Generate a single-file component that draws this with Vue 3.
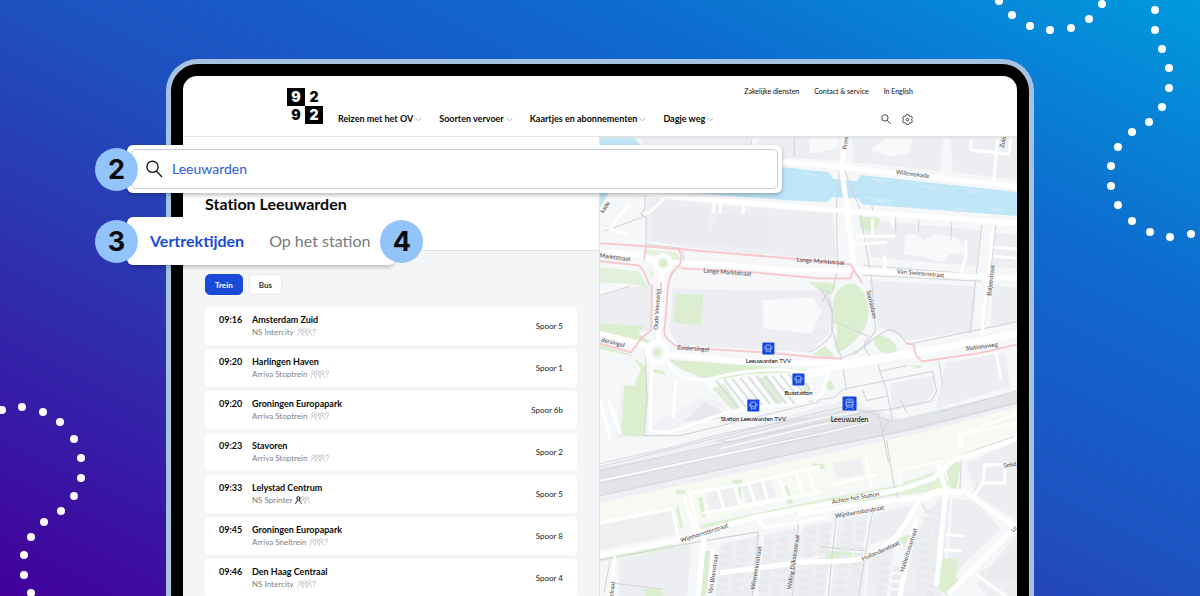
<script setup>
import { ref } from 'vue'

const navItems = ['Reizen met het OV', 'Soorten vervoer', 'Kaartjes en abonnementen', 'Dagje weg']
const serviceLinks = ['Zakelijke diensten', 'Contact & service', 'In English']
const query = ref('Leeuwarden')

const departures = [
  { time: '09:16', to: 'Amsterdam Zuid', type: 'NS Intercity', track: 'Spoor 5', known: false },
  { time: '09:20', to: 'Harlingen Haven', type: 'Arriva Stoptrein', track: 'Spoor 1', known: false },
  { time: '09:20', to: 'Groningen Europapark', type: 'Arriva Stoptrein', track: 'Spoor 6b', known: false },
  { time: '09:23', to: 'Stavoren', type: 'Arriva Stoptrein', track: 'Spoor 2', known: false },
  { time: '09:33', to: 'Lelystad Centrum', type: 'NS Sprinter', track: 'Spoor 5', known: true },
  { time: '09:45', to: 'Groningen Europapark', type: 'Arriva Sneltrein', track: 'Spoor 8', known: false },
  { time: '09:46', to: 'Den Haag Centraal', type: 'NS Intercity', track: 'Spoor 4', known: false },
]

const dotsRight = [
  [999, 1], [1012, 15], [1030, 26], [1050, 30], [1071, 28], [1089, 19], [1102, 4],
  [1155, 10], [1155, 30], [1162, 49], [1169, 68], [1169, 88], [1162, 107], [1149, 122], [1132, 132],
  [1118, 147], [1111, 166], [1111, 186], [1118, 205], [1132, 221], [1150, 232], [1170, 237], [1191, 234],
]
const dotsLeft = [
  [2, 410], [22, 407], [43, 412], [60, 422], [74, 439], [81, 458], [81, 478],
  [74, 496], [61, 511], [44, 522], [31, 537], [24, 555], [24, 575], [31, 593],
]

const labels = [
  { t: 'Willemskade', x: 912, y: 174, r: 7 },
  { t: 'Prins', x: 845, y: 143, r: -84 },
  { t: 'Zuid', x: 1002, y: 142, r: -80 },
  { t: 'kade', x: 605, y: 207, r: -55 },
  { t: 'Marktstraat', x: 615, y: 257, r: 7 },
  { t: 'Lange Marktstraat', x: 727, y: 272, r: 4 },
  { t: 'Lange Marktstraat', x: 820, y: 261, r: 4 },
  { t: 'Van Swietenstraat', x: 920, y: 273, r: 5 },
  { t: 'Baljeestraat', x: 990, y: 280, r: -83 },
  { t: 'Sophialaan', x: 871, y: 304, r: 77 },
  { t: 'Oude Veemarkt', x: 657, y: 309, r: -86 },
  { t: 'Zuidersingel', x: 693, y: 348, r: 4 },
  { t: 'dersingel', x: 613, y: 342, r: 14 },
  { t: 'Stationsweg', x: 981, y: 346, r: -7 },
  { t: 'Wijnhornsterstraat', x: 704, y: 532, r: -18 },
  { t: 'Achter het Station', x: 855, y: 497, r: -10 },
  { t: 'Wijnhornsterstraat', x: 859, y: 511, r: -10 },
  { t: 'Hollanderstraat', x: 880, y: 550, r: -24 },
  { t: 'Halbertsmastraat', x: 908, y: 549, r: -73 },
  { t: 'Van Blomstraat', x: 713, y: 573, r: -81 },
  { t: 'Winsemiusstraat', x: 756, y: 567, r: -81 },
  { t: 'Waling Dijkstrastraat', x: 793, y: 561, r: -81 },
  { t: 'straat', x: 612, y: 588, r: -82 },
  { t: 'Smid', x: 1009, y: 464, r: -10 },
  { t: 'Le', x: 1013, y: 528, r: -50 },
]

const stops = [
  { name: 'Leeuwarden TVV', x: 768, y: 348 },
  { name: 'Busstation', x: 798, y: 379 },
  { name: 'Station Leeuwarden TVV', x: 753, y: 405 },
]

const bays = Array.from({ length: 11 }, (_, i) => [716 + i * 8, 380 - Math.min(i, 5) - Math.max(0, i - 7)])
const gardens = []
for (const [x0, y0, n] of [[722, 544, 7], [738, 540, 7], [764, 538, 8], [778, 536, 8], [806, 528, 9], [822, 524, 9],
  [843, 522, 9], [857, 520, 7], [880, 560, 5], [893, 566, 4], [924, 508, 12], [936, 502, 12]]) {
  for (let i = 0; i < n; i++) gardens.push([x0 - i, y0 + i * 8])
}
</script>

<template>
  <main class="page">
    <svg class="dots dots-right" viewBox="990 0 210 250" width="210" height="250" aria-hidden="true">
      <circle v-for="(d, i) in dotsRight" :key="i" :cx="d[0]" :cy="d[1]" r="4" fill="#fff" />
    </svg>
    <svg class="dots dots-left" viewBox="0 396 100 200" width="100" height="200" aria-hidden="true">
      <circle v-for="(d, i) in dotsLeft" :key="i" :cx="d[0]" :cy="d[1]" r="4" fill="#fff" />
    </svg>

    <div class="tablet">
      <div class="bezel">
        <div class="screen">
          <header class="header">
            <a class="logo" href="#" aria-label="9292">
              <span class="inv">9</span><span>2</span><span>9</span><span class="inv">2</span>
            </a>
            <nav class="nav">
              <a v-for="item in navItems" :key="item" href="#">
                {{ item }}
                <svg width="7" height="5" viewBox="0 0 7 5" aria-hidden="true"><path d="M.6 .8 3.5 3.8 6.4 .8" fill="none" stroke="#a3a6aa" stroke-width=".8" /></svg>
              </a>
            </nav>
            <div class="side">
              <div class="service"><a v-for="s in serviceLinks" :key="s" href="#">{{ s }}</a></div>
              <div class="tools">
                <button type="button" aria-label="Zoeken">
                  <svg width="10" height="10" viewBox="0 0 10 10"><g fill="none" stroke="#333" stroke-width=".9"><circle cx="3.9" cy="3.9" r="3.2" /><path d="M6.2 6.3 9.6 9.7" /></g></svg>
                </button>
                <button type="button" aria-label="Instellingen">
                  <svg width="11" height="11" viewBox="0 0 11 11"><g fill="none" stroke="#333" stroke-width=".9" stroke-linejoin="round"><path d="M4.400 .6h2.200l.4 1.200 1.100.6 1.300-.2 1.100 1.900-.9 1v1l.9 1-1.100 1.900-1.300-.2-1.100.6-.4 1.100H4.400L4 9.400l-1.100-.6-1.300.2L.5 7.100l.9-1v-1l-.9-1 1.100-1.900 1.300.2L4 1.800z" /><circle cx="5.500" cy="5.600" r="1.300" /></g></svg>
                </button>
              </div>
            </div>
          </header>

          <div class="content">
            <section class="panel">
              <div class="panel-head"><h1>Station Leeuwarden</h1></div>
              <div class="filters">
                <button type="button" class="active">Trein</button>
                <button type="button">Bus</button>
              </div>
              <ul class="departures">
                <li v-for="(d, i) in departures" :key="i">
                  <time>{{ d.time }}</time>
                  <div class="dest">
                    <strong>{{ d.to }}</strong>
                    <span class="type">{{ d.type }}
                      <svg width="20" height="8" viewBox="0 0 20 8" aria-hidden="true">
                        <g fill="none" stroke-linecap="round">
                          <g v-for="n in 3" :key="n" :stroke="d.known && n === 1 ? '#111' : '#b4b7bc'" :stroke-width="d.known && n === 1 ? 1 : 0.7">
                            <circle :cx="n * 4.3 - 1" cy="2.3" r="1.6" />
                            <path :d="`M${n * 4.3 - 3.6} 7.400l1.600-2.700M${n * 4.3 - 0.2} 4l2.100 3.400`" />
                          </g>
                          <path v-if="!d.known" d="M15.600 2.300c.2-1.800 3.200-1.600 3 .1-.1 1.200-1.500 1.200-1.500 2.500M17.100 6.800v.2" stroke="#a9adb2" stroke-width=".8" />
                        </g>
                      </svg>
                    </span>
                  </div>
                  <span class="track">{{ d.track }}</span>
                </li>
              </ul>
            </section>

            <svg class="map" viewBox="600 137 417 459" preserveAspectRatio="xMinYMin slice" role="img" aria-label="Kaart rond Station Leeuwarden">
              <rect x="600" y="136" width="900" height="900" fill="#f5f7f9" />
              <!-- building blocks -->
              <g fill="#edeef1">
                <path d="M640 136h110v20l-105-8zM757 136h82v24l-80-3zM852 136h90l-2 35-88-9zM950 136h67v44l-65-8z" />
                <path d="M647 198l20 1 60 6 80 6 25 2 4 46-80-5-76-8-34-6z" />
                <path d="M862 220l32 2 86 8-5 36-84-7-20-2zM992 233l25 1v34l-28-2z" />
                <path d="M600 296l30-9 22-1-2 45-50-2zM672 288l70 2 85 0 7 14-6 30-20 18-130-8-8-12z" />
                <path d="M868 280l108 6-4 44-64 10-30-14zM992 285l25 2v34l-27 4z" />
                <path d="M890 383l45-9-2 18-12 12-30 6zM945 362l60-10 4 34-74 22z" />
                <path d="M622 388l-6 50 70-12 46-24-34-4-44 26z" opacity=".6" />
                <path d="M619 559l72-16-4 53h-68z" />
                <path d="M720 543l40-9-7 62h-38zM764 534l34-7-7 69h-33zM803 526l31-6-8 34-32 3zM838 519l30-5-7 32-26 8zM873 513l42-9-12 28-35 12z" />
                <path d="M722 564l36-6-5 38h-34zM795 563l34-2-5 35h-33zM834 561l32-4-4 39h-32zM868 553l26-9-8 52h-20zM910 540l30-45 9 3-8 98h-40zM965 462l52-22v80l-42-26z" />
                <path d="M952 498l22 2 26 28-54 52zM976 582l41-50v64h-30z" />
              </g>
              <g fill="#e8e9ed">
                <path d="M650 207h60l-4 38-52-6zM720 212l50 6-3 32-62-8zM975 574l42-28v34l-28-2z" opacity=".7" />
              </g>
              <g fill="#f8f9fb">
                <path d="M762 300l50-3 9 14-10 22-48-5zM808 136h30v12l-28 6zM870 150l18-14h24l-4 18-20 2zM905 234h10l8 6 10-6 24 4 8 14-16 2-8 8-20-6-18-2z" />
              </g>
              <!-- water -->
              <g fill="#bfe6f7">
                <path d="M600 136h33l12 14 137 17 26 3 20 2 5 7 24 2 3-6 157 17v24l-155-12-5-6-26-1-4 5-40-2-187-14z" />
                <path d="M600 193h9l-9 14z" />
              </g>
              <path d="M868 178l24 2-12 3zM918 185l24 2-12 3zM862 196l36 4-18 3zM960 188l24 3-12 3zM945 206l24 3-12 3zM985 206l22 3-12 3zM800 172l20 3-12 2z" fill="#cdebf7" />
              <!-- parks -->
              <g fill="#dbefd0">
                <path d="M600 267l38 4 13 19-18-6-33-2z" opacity=".75" /><path d="M646 249l30 3 8 13-6 4-14-12-18-3zM653 272l-6-4 5 10zM670 272l6-4-7 14z" opacity=".7" />
                <path d="M676 293l27 2-2 30-28-3z" />
                <path d="M600 323l44 2-6 8 12 8-8 4-20-7-22-5zM600 348l32 8 14 10 2 30-5 40-22-1 3-50 10 0 7-17-10-14-31-10z" />
                <path d="M668 359l150 11v3l-60 1-30 5-28-2-20-9z" />
                <path d="M652 368l12 3 2 4-12-3z" />
                <path d="M808 282l20 0 8 4-5 9-14-6zM833 302c0-10 8-18 18-19 10 2 16 14 17 27 0 14-6 22-13 29-7 8-12 10-17 14-8-8-1-16-1-25-4-10-5-18-4-26zM812 354l12-8 10 9-6 3z" />
                <path d="M874 338c6-8 20 2 23 11-6 8-25 3-23-11zM858 216l22 2-6 14-14-2z" />
                <path d="M908 365l14 0-4 3zM824 383l6-4 5 9-6 2z" />
                <path d="M825 549l28 3-4 7-24 0zM898 538l12-5-6 12zM942 557l16 2-3 18 7 5-14 14-12-10zM642 588l18 0 4 8h-18z" />
              </g>
              <!-- area south of the tracks -->
              <path d="M600 500l220-48 100-22 97-24v32l-60 22-26 6-40 14-70 14-93 20-22 4-106 24z" fill="#f7faf2" />
              <path d="M600 553l74-13 0 8-74 13z" fill="#e6f3dd" />
              <g fill="#eeeff1"><path d="M706 492l30-6 3 20-30 5zM742 484l28-6 6 18-30 7zM832 463l28-6 4 16-28 5zM600 524l75-15 3 24-78 16z" /></g>
              <g fill="#dbefd0"><path d="M676 489h9v4h-9zM732 479h10v5h-10zM812 463h12v5h-12zM738 485h3v14h-3zM784 485l3 0 6 18h-6zM678 505l5 22-3 1-4-20zM698 497l4 0 4 19-4 0zM946 470l8-10 6 2-4 26h-6zM704 550h6l-4 46h-6z" /><path d="M700 524l58-12 62-13 74-14 46-16 9 14-7 7-55 6-59 12-60 7-66 18z" opacity=".8" /></g>
              <!-- railway -->
              <path d="M600 466l80-21 138-38 30-8 60 22 110-31v16l-97 26-100 22-221 48z" fill="#eff0f4" />
              <g fill="#e0e2e6"><path d="M600 482l220-46 68-15 129-30v12l-97 25-100 20-220 47zM600 468l65-12 155-32 46-12 2 7-48 12-220 46zM712 440l106-26 30-6 28 2 3 8 22 2-2 10-30 8-60 6-60 2z" opacity=".9" /></g>
              <g fill="none" stroke="#cfd2d7" stroke-width=".8">
                <path d="M600 466l218-54 40-9M600 470l130-29M600 478l220-46 48-11M600 482l220-47M600 495l220-48 70-14 127-31M937 412l80-22M704 447l156-34M600 463l70-16 52-14 86-16" />
              </g>
              <g fill="none" stroke="#fbfcfd" stroke-width="1.4"><path d="M600 480l220-47 48-11M726 440l92-22 40-7M680 424l40-4M720 448l100-24 42-7" /></g>
              <!-- footpaths -->
              <g fill="none" stroke="#d3d6d9" stroke-width="1.100">
                <path d="M645 196v12l-4 6 5 3v27M604 231l41-15M646 244l35 4 5 18M839 168l-3 36 1 66-5 20M843 168l16 40 12 72 4 50-8 12-13 12M600 295l30-9M829 290l-8 12M861 275l120 6M863 265l150 12M981 225l-12 108M995 225l-12 100M895 213v20M918 220v12M951 222l-1 18M873 213l-2-8" />
                <path d="M828 298l4 12-1 18 10 30 5 32M818 286c14 18 22 44 6 56-6 6-12 8-16 10M832 320l36 16M868 338c-10 6 0 18 8 22l10 30 6 30M842 357c20-6 30-20 44-27 8-4 16 8 21 14l110-23M808 401l26-4 8-8 90-18 4 20-6 10-44 8-26 3M878 371l28-6M862 389l4 11 20-4M868 412l20 8-6 12 6 30M878 412l4 20M900 400l6 12M886 440l8 48 4 10M938 360l4 24M645 350l2 50-3 35h36l140-34M600 559l98-18 60-10M866 550l-46-4M836 516l-5 44-3 36M872 510l-10 60-4 26M758 530l-6 66M798 523l-6 73M961 454l52-18M961 454l-2 36M920 500l4 8M610 560l-6 32M612 582l50 6M752 136l-3 18M794 136v20" />
              </g>
              <!-- parking rows -->
              <path d="M704 382l42-8 44-2 20 6 4 8-6 14-24 6-50 8z" fill="#fbfcfc" />
              <path d="M712 388l12-5 16 24-8 3zM757 379l10-4 17 26-8 4zM802 386l6-4 2 8-6 4z" fill="#e0efd8" />
              <g fill="none" stroke="#dcdfe2" stroke-width="2"><path v-for="(b, i) in bays" :key="'b' + i" :d="`M${b[0]} ${b[1]}l${i > 7 ? 14 : 22} ${i > 7 ? 18 : 28}`" /></g>
              <path d="M684 421l20-20 16 9 6 8z" fill="#e6e8eb" />
              <!-- houses -->
              <g fill="#e9eaed"><rect v-for="(g, i) in gardens" :key="'g' + i" :x="g[0]" :y="g[1]" width="9" height="5" /></g>
              <!-- roads -->
              <g fill="none" stroke="#fff" stroke-linejoin="round" stroke-linecap="round">
                <g stroke-width="5">
                  <path d="M760 160l48 4 60 6 107 12 42 5M600 186l70 10 140 12 81 6 126 9M845 136l-4 32 5 36 8 66" />
                  <path d="M600 251l40 4 16 6M670 262l60 3 60 5 62 0 165 8M662 273l-4 68M600 333l44 11M668 354l75 7 65 2 40-2 70-10 99-19M808 371l60-9 149-28" />
                  <path d="M600 555l80-16 22-8 50-14 70-13 80-16 30-10 20-18 65-22M704 534l-6 62M938 466l7 24-9 93" />
                  <path d="M800 513l60-10 66-6 12-6 26 0 48 34M940 490c-14 1-20 8-28 20-10 20-18 30-42 45-20 8-50 4-74 7l-77 10M915 520l-16 76M1017 524l-42 42-26 26" />
                </g>
                <g stroke-width="3">
                  <path d="M668 362c10 18 30 20 44 16 20-6 70-14 100-4M652 362l-2 68 18 2 58-20 50-8M676 380l-3 36M628 205l-18 24 16 4M648 213l16-14M715 198l-2 14M720 200v12M743 201v11M892 214v12M993 224l-12 110M997 136l-4 46M970 140v10l38 4 2-18M857 236l36 0M855 244l30-2M872 220v14M884 268v-12M965 241v16l-5 16M994 247l23 2M994 256l23 2M808 376l20-4-6 20-8 8M994 346l6 32M600 400l10 38M608 398l12 34" />
                  <path d="M690 495l8 34M684 497l12 36M692 492l50-8 76-18M718 489l6 20M734 484l6 20M748 482l6 18M762 480l6 22M778 476l8 20M796 472l6 22M808 470l6 20M704 512l80-14 34-6M600 522l72-14 6 30M756 517l8 10 60-10M974 494l8-12 2-18h20v18h-20M946 534l16 1M944 549l16 1M976 574l30 22M960 446v-10M615 556l-5 40M712 550l-2 46M865 456l6 30M832 484l44-10" />
                  <path d="M900 484l-2-14 8-2 36-8M960 438c4-8 24-8 57-16M962 442l-4-8 56-20" stroke-width="2" />
                </g>
                <circle cx="663" cy="263" r="8" stroke-width="4" /><circle cx="657" cy="352" r="10" stroke-width="5" />
              </g>
              <g fill="#dbefd0"><circle cx="663" cy="263" r="4" /><circle cx="657" cy="352" r="4" /></g>
              <!-- cycle routes -->
              <g fill="none" stroke="#f9c6cc" stroke-width="1.800" stroke-linejoin="round">
                <path d="M600 243l46 3 34 3 60 5 60 5 50 5 4 7 8 12M600 261l38 4c8 4 8 16 12 20M646 246l-2 14M678 249c6 8 3 16-4 21-9 8-6 36-10 60 0 8 8 14 16 17l84 5 54 5 24 1M681 268l60 3 77 7 32 0 3-9M652 284l-1 46-10 8-10 14-31-9M905 343l8 1 2 10 6 7 56-8 40-9M661 282v12" />
              </g>
              <path d="M600 136h417v3H600z" fill="#dfe1e5" opacity=".6" />
              <g class="street">
                <text v-for="(l, i) in labels" :key="'l' + i" :x="l.x" :y="l.y" :transform="`rotate(${l.r} ${l.x} ${l.y})`" dy="2">{{ l.t }}</text>
              </g>
              <g v-for="s in stops" :key="s.name" class="stop">
                <rect :x="s.x - 6" :y="s.y - 6" width="12" height="12" rx="1" fill="#1646dc" />
                <g fill="none" stroke="#b9d0ff" stroke-width=".8">
                  <rect :x="s.x - 2.5" :y="s.y - 3.4" width="5" height="6" rx=".8" />
                  <path :d="`M${s.x - 2.5} ${s.y + .6}h5M${s.x - 1.8} ${s.y + 2.6}v1.400M${s.x + 1.8} ${s.y + 2.6}v1.400M${s.x - 3.6} ${s.y - 1.8}v1.800M${s.x + 3.6} ${s.y - 1.8}v1.800`" />
                </g>
                <text :x="s.x" :y="s.y + 15">{{ s.name }}</text>
              </g>
              <g class="stop main">
                <rect x="842" y="396" width="14" height="14" rx="1" fill="#1646dc" />
                <g fill="none" stroke="#b9d0ff" stroke-width=".8"><rect x="845.500" y="398.500" width="7" height="8" rx="2" /><path d="M845.500 402h7M845.500 404.500h7M846.500 406.800l-1 1.600M851.500 406.800l1 1.600M847 400.400h4" /></g>
                <text x="849" y="421">Leeuwarden</text>
              </g>
            </svg>
          </div>
        </div>
      </div>

      <form class="callout search" @submit.prevent>
        <span class="badge">2</span>
        <div class="field">
          <svg width="17" height="18" viewBox="0 0 17 18" aria-hidden="true"><g fill="none" stroke="#1c1c1c" stroke-width="1.400"><circle cx="6.500" cy="6.800" r="5.600" /><path d="M10.300 11 16 17" /></g></svg>
          <input v-model="query" type="text" aria-label="Zoek halte of station">
        </div>
      </form>

      <div class="callout tabs" role="tablist">
        <span class="badge">3</span>
        <button type="button" role="tab" aria-selected="true" class="current">Vertrektijden</button>
        <button type="button" role="tab" aria-selected="false">Op het station</button>
        <span class="badge end">4</span>
      </div>
    </div>
  </main>
</template>

<style>
body { margin: 0; }
</style>

<style scoped>
.page {
  position: relative;
  display: flex;
  box-sizing: border-box;
  height: 100vh;
  padding: 59px 166px 0;
  overflow: hidden;
  background: linear-gradient(to top right, #42009a 0%, #3129ac 25%, #1f50c0 50%, #0e6bce 75%, #009ade 100%);
  font-family: Lato, "Open Sans", sans-serif;
  font-variant-ligatures: none;
  color: #0a0a0a;
}
a { color: inherit; text-decoration: none; }
button { font-family: inherit; cursor: pointer; }
.dots { position: absolute; }
.dots-right { top: 0; right: 0; }
.dots-left { left: 0; bottom: 0; }

.tablet {
  position: relative;
  display: flex;
  flex: 1;
  min-width: 0;
  padding: 5px 5px 0;
  border-radius: 32px 32px 0 0;
  background: #a5c3e0;
}
.bezel { display: flex; flex: 1; min-width: 0; padding: 12px 12px 0; border-radius: 27px 27px 0 0; background: #000; }
.screen { display: flex; flex: 1; flex-direction: column; min-width: 0; overflow: hidden; border-radius: 14px 14px 0 0; background: #fff; }

.header {
  display: flex;
  flex: none;
  box-sizing: border-box;
  height: 61px;
  padding: 12px 104px 0;
  border-bottom: 1px solid #e1e2e4;
}
.logo { display: grid; grid-template-columns: 18px 18px; grid-template-rows: 18px 18px; flex: none; margin-right: 15px; }
.logo span { font: 900 14px/18px Inter, sans-serif; text-align: center; }
.logo .inv { background: #000; color: #fff; }
.nav { display: flex; gap: 17px; align-items: center; align-self: flex-start; margin-top: 25px; font-size: 9px; line-height: 12px; font-weight: 700; white-space: nowrap; }
.nav a { display: flex; gap: 2px; align-items: center; }
.side { display: flex; flex-direction: column; align-items: flex-end; margin-top: -1px; margin-left: auto; }
.service { display: flex; gap: 15px; font-size: 7px; line-height: 8px; white-space: nowrap; }
.tools { display: flex; gap: 11px; margin-top: 19px; }
.tools button { display: flex; padding: 0; border: 0; background: none; }

.content { display: grid; grid-template-columns: 1fr 1fr; flex: 1; min-height: 0; }
.panel { min-width: 0; background: #f3f5f7; border-right: 1px solid #e2e5e8; }
.panel-head { box-sizing: border-box; height: 114px; padding: 57px 22px 0; border-bottom: 1px solid #dfe2e4; background: #fff; }
h1 { margin: 0; font-size: 16px; line-height: 20px; font-weight: 700; }
.filters { display: flex; gap: 6px; padding: 23px 22px 12px; }
.filters button { height: 21px; padding: 0 9px; border: 1px solid #e8eaec; border-radius: 5px; background: #fff; font-size: 8px; font-weight: 700; color: #333; }
.filters .active { border-color: #1a4bd8; background: #1a4bd8; color: #fff; }
.departures { display: flex; flex-direction: column; gap: 4px; margin: 0; padding: 0 22px; list-style: none; }
.departures li { display: flex; box-sizing: border-box; height: 38px; padding: 7px 14px 0; border-radius: 4px; background: #fff; line-height: 12px; }
time { flex: none; width: 33px; font-size: 9px; font-weight: 700; }
.dest { display: flex; flex: 1; flex-direction: column; }
.dest strong { font-size: 9px; }
.type { display: flex; gap: 3px; align-items: center; font-size: 8px; color: #7d8085; }
.track { margin-top: 6px; font-size: 8px; color: #222; }

.map { display: block; width: 100%; height: 100%; min-height: 0; }
.street text { font: 6px Lato, sans-serif; fill: #3f4145; text-anchor: middle; }
.stop text { font: 6px Lato, sans-serif; fill: #000; text-anchor: middle; }
.main text { font-size: 7px; }

.callout { position: absolute; left: -39px; box-sizing: border-box; height: 48px; border-radius: 6px; background: #fff; box-shadow: 0 2px 4px rgba(0, 0, 0, .28); }
.search { top: 86px; right: 252px; padding: 4px; }
.field { display: flex; gap: 9px; align-items: center; box-sizing: border-box; height: 40px; padding: 0 14px; border: 1px solid #c9ccd0; border-radius: 5px; }
.field input { flex: 1; min-width: 0; padding: 0; border: 0; outline: 0; background: none; font: 14px/20px Lato, sans-serif; color: #2c5bdc; }
.tabs { top: 158px; display: flex; gap: 25px; align-items: center; padding: 0 25px 0 23px; box-shadow: 0 3px 4px -1px rgba(0, 0, 0, .25); }
.tabs button { padding: 0; border: 0; background: none; font-size: 16px; line-height: 20px; color: #77797d; white-space: nowrap; }
.tabs .current { font-weight: 700; color: #1a4bd8; }
.badge { position: absolute; top: 3px; left: -32px; width: 43px; height: 43px; border-radius: 50%; background: #93c3fb; font: 700 27px/43px Inter, sans-serif; text-align: center; color: #0a0a0a; }
.badge.end { right: -28px; left: auto; }
</style>
